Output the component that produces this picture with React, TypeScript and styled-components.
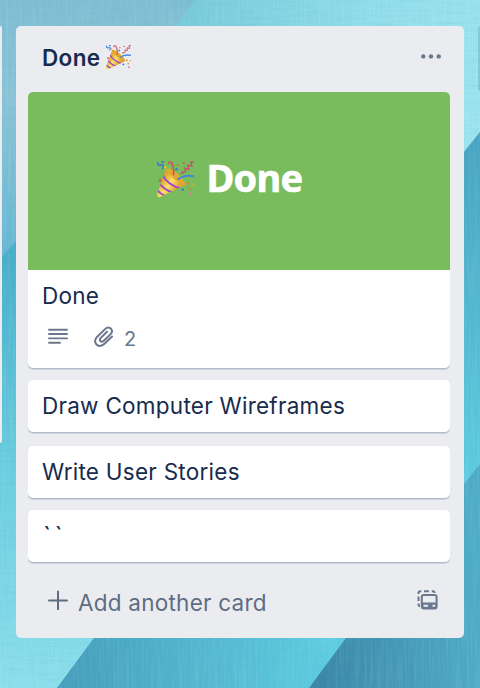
import React from "react";
import styled, { createGlobalStyle } from "styled-components";

const GlobalStyle = createGlobalStyle`
  * { box-sizing: border-box; }
  html, body { margin: 0; padding: 0; }
  body { font-family: Inter, "Liberation Sans", sans-serif; color: #172b4d; overflow: hidden; }
`;

const Board = styled.main`
  position: relative;
  width: 480px;
  height: 688px;
  padding-top: 26px;
  overflow: hidden;
  display: grid;
  grid-template-columns: 2px 448px 2px;
  column-gap: 14px;
  align-items: start;
  isolation: isolate;
`;

const Wallpaper = styled.svg`
  position: absolute;
  inset: 0;
  z-index: -1;
`;

const PreviousList = styled.div`
  height: 417px;
  border-radius: 0 5px 5px 0;
  background: #ebecf0;
`;

const NextList = styled.div`
  height: 65px;
  border-radius: 5px 0 0 5px;
  background: rgba(70, 140, 160, 0.28);
`;

const List = styled.section`
  height: 612px;
  padding: 0 14px 0 12px;
  border-radius: 5px;
  background: #ebecf0;
  display: flex;
  flex-direction: column;
`;

const ListHeader = styled.header`
  height: 66px;
  padding: 0 9px 4px 14px;
  display: flex;
  align-items: center;
  flex: none;
`;

const ListTitle = styled.h2`
  margin: 0;
  padding-top: 2px;
  font-size: 22.5px;
  line-height: 30px;
  font-weight: 600;
  letter-spacing: 0.35px;
`;

const HeaderEmoji = styled.span`
  display: flex;
  margin-left: 6px;
  flex: 1;
`;

const IconButton = styled.button`
  padding: 0;
  border: 0;
  background: none;
  color: #6b778c;
  display: flex;
`;

const Cards = styled.div`
  display: flex;
  flex-direction: column;
`;

const Card = styled.article<{ $height: number; $gap: number }>`
  height: ${(p) => p.$height}px;
  margin-bottom: ${(p) => p.$gap}px;
  border-radius: 5px;
  overflow: hidden;
  background: #fff;
  box-shadow: 0 1px 0 #b4bbc8, 0 2px 0 #cfd3dc;
`;

const Cover = styled.div`
  height: 178px;
  padding: 0 18px 4px 0;
  background: #79bc5d;
  color: #fff;
  display: flex;
  align-items: center;
  justify-content: center;
  gap: 12px;
`;

const CoverText = styled.span`
  padding-bottom: 4px;
  font: 700 38px/44px "Noto Sans", sans-serif;
  letter-spacing: -0.7px;
  -webkit-text-stroke: 0.6px #fff;
`;

const CardTitle = styled.div<{ $spread?: boolean }>`
  padding: 11px 14px 0 ${(p) => (p.$spread ? 15 : 14)}px;
  font-size: ${(p) => (p.$spread ? 25 : 22.5)}px;
  line-height: 30px;
  letter-spacing: ${(p) => (p.$spread ? 3.5 : 0.26)}px;
`;

const Badges = styled.div`
  height: 30px;
  margin-top: 15px;
  padding-left: 20px;
  display: flex;
  align-items: flex-start;
  color: #6b778c;
`;

const AttachmentBadge = styled.span`
  display: flex;
  margin-left: 26px;
  gap: 10px;
  font-size: 20px;
  line-height: 27px;
`;

const Composer = styled.footer`
  display: flex;
  align-items: center;
  height: 76px;
  padding: 0 11px 0 20px;
  color: #5e6c84;
`;

const AddCard = styled.span`
  flex: 1;
  margin-left: 10px;
  padding-top: 6px;
  font-size: 22.5px;
  line-height: 30px;
  letter-spacing: 0.24px;
`;

function BoardWallpaper() {
  return (
    <Wallpaper width="480" height="688" viewBox="0 0 480 688" aria-hidden="true">
      <defs>
        <linearGradient id="sky" x1="0" y1="0" x2="0" y2="250" gradientUnits="userSpaceOnUse">
          <stop offset="0" stopColor="#7ebdd2" />
          <stop offset="0.4" stopColor="#8ac3d6" />
          <stop offset="1" stopColor="#68b7d3" />
        </linearGradient>
        <linearGradient id="upper" x1="180" y1="0" x2="480" y2="60" gradientUnits="userSpaceOnUse">
          <stop offset="0" stopColor="#76c9da" />
          <stop offset="0.6" stopColor="#90dce9" />
          <stop offset="1" stopColor="#9ae3ee" />
        </linearGradient>
        <linearGradient id="pale" x1="0" y1="250" x2="0" y2="688" gradientUnits="userSpaceOnUse">
          <stop offset="0" stopColor="#47adc9" />
          <stop offset="0.5" stopColor="#6acddf" />
          <stop offset="1" stopColor="#8cdeeb" />
        </linearGradient>
        <linearGradient id="middle" x1="70" y1="660" x2="330" y2="660" gradientUnits="userSpaceOnUse">
          <stop offset="0" stopColor="#459fbd" />
          <stop offset="0.5" stopColor="#53b6cf" />
          <stop offset="1" stopColor="#5dcce0" />
        </linearGradient>
        <linearGradient id="right" x1="0" y1="140" x2="0" y2="480" gradientUnits="userSpaceOnUse">
          <stop offset="0" stopColor="#49a4c1" />
          <stop offset="1" stopColor="#5dcbdf" />
        </linearGradient>
        <linearGradient id="deep" x1="320" y1="660" x2="480" y2="650" gradientUnits="userSpaceOnUse">
          <stop offset="0" stopColor="#3b87a7" />
          <stop offset="1" stopColor="#4eabc7" />
        </linearGradient>
        <filter id="warp" x="0" y="0" width="100%" height="100%">
          <feTurbulence type="fractalNoise" baseFrequency="0.45 0.02" numOctaves="2" seed="4" />
          <feColorMatrix values="0 0 0 0 0.8  0 0 0 0 1  0 0 0 0 1  1.2 0 0 0 -0.5" />
        </filter>
        <filter id="weft" x="0" y="0" width="100%" height="100%">
          <feTurbulence type="fractalNoise" baseFrequency="0.03 0.4" numOctaves="2" seed="9" />
          <feColorMatrix values="0 0 0 0 0.1  0 0 0 0 0.4  0 0 0 0 0.55  1 0 0 0 -0.45" />
        </filter>
      </defs>
      <rect width="480" height="688" fill="url(#sky)" />
      <path d="M195 0H480V132L464 152L200 480L100 220L176 26Z" fill="url(#upper)" />
      <path d="M0 259L16 241L200 300V500L94 638L57 688H0Z" fill="url(#pale)" />
      <path d="M94 638H346L309 688H57Z" fill="url(#middle)" />
      <path d="M480 132L464 152L300 350V600H480Z" fill="url(#right)" />
      <path d="M346 638L464 484L480 464V688H309Z" fill="url(#deep)" />
      <rect width="480" height="688" filter="url(#warp)" opacity="0.2" />
      <rect width="480" height="688" filter="url(#weft)" opacity="0.3" />
    </Wallpaper>
  );
}

function PartyPopper({ size }: { size: number }) {
  const id = `cone${size}`;
  return (
    <svg width={size} height={size} viewBox="0 0 36 36" fill="none" aria-hidden="true">
      <defs>
        <linearGradient id={id} x1="6" y1="17" x2="19" y2="27" gradientUnits="userSpaceOnUse">
          <stop stopColor="#dfa42c" />
          <stop offset="0.5" stopColor="#ffdf68" />
          <stop offset="1" stopColor="#e0a238" />
        </linearGradient>
        <clipPath id={`${id}clip`}>
          <path d="M9 7C15 7 26 17 28 23L3 35Q0 36 0 32Z" />
        </clipPath>
      </defs>
      <path d="M9 7C15 7 26 17 28 23L3 35Q0 36 0 32Z" fill={`url(#${id})`} />
      <path d="M10 7.5C11 14 20 22 27.500 22.500C24 15 15 7 10 7.500Z" fill="#e0a92f" />
      <g clipPath={`url(#${id}clip)`} stroke="#9648cf" strokeWidth="1.900">
        <path d="M5 13Q10 23 23 27" />
        <path d="M2 21Q6 28 16 31" />
        <path d="M0 28Q3 32 8 34" />
      </g>
      <path d="M16 14Q17 6 14 1.500Q12 0 11 3" stroke="#dd4a62" strokeWidth="1.600" />
      <path d="M20 18Q27 13 36 15" stroke="#4585dc" strokeWidth="2" />
      <path d="M25 10L24 12L28 10L27 7L31 8L30 4L34 5L33 1L36 1" stroke="#c9506a" strokeWidth="1.300" />
      <path d="M1 1Q0 5 4 4T5 8M4 1L7 1" stroke="#3776d9" strokeWidth="1.500" />
      <circle cx="20" cy="4" r="1" fill="#ef547b" />
      <circle cx="26" cy="2" r="1" fill="#e64568" />
      <circle cx="8" cy="6" r="1.300" fill="#d9c52e" />
      <circle cx="3" cy="19" r="1.300" fill="#df4a56" />
      <circle cx="19" cy="8" r="1.300" fill="#4478db" />
      <circle cx="30" cy="22" r="1.300" fill="#d9872b" />
      <circle cx="35" cy="23" r="1.100" fill="#d4a72d" />
      <circle cx="25" cy="28" r="1.300" fill="#357ccc" />
      <circle cx="32" cy="27" r="1.200" fill="#c08a3a" />
      <circle cx="33" cy="32" r="1.300" fill="#e4799a" />
    </svg>
  );
}

function MoreIcon() {
  return (
    <svg width="20" height="6" viewBox="0 0 20 6" fill="currentColor">
      <circle cx="2.300" cy="2.400" r="2.200" />
      <circle cx="10" cy="2.400" r="2.200" />
      <circle cx="17.700" cy="2.400" r="2.200" />
    </svg>
  );
}

function DescriptionIcon() {
  return (
    <svg width="20" height="20" viewBox="0 0 20 20" stroke="currentColor" strokeWidth="1.900" strokeLinecap="round">
      <path d="M1 3.700H19M1 8H19M1 12.400H19M1 16.800H12" />
    </svg>
  );
}

function AttachmentIcon() {
  return (
    <svg width="20" height="22" viewBox="0 0 20 22" fill="none" stroke="currentColor" strokeWidth="2" strokeLinecap="round" strokeLinejoin="round">
      <path d="M18 10.500L10.500 17.800C7.500 20.800 3.800 20.300 2.200 18.100C.5 15.800 1 13 3.200 10.800L11.100 3.100C13.200 1 15.600 1.300 17 2.800C18.400 4.400 18.200 6.500 16.600 8.100L9.500 15C8.300 16.100 7.100 15.800 6.400 15C5.600 14.200 5.800 12.900 6.800 11.900L13 5.800" />
    </svg>
  );
}

function PlusIcon() {
  return (
    <svg width="20" height="20" viewBox="0 0 20 20" stroke="currentColor" strokeWidth="2" strokeLinecap="round">
      <path d="M1 10.500H19M10 1.500V19.500" />
    </svg>
  );
}

function TemplateIcon() {
  return (
    <svg width="22" height="20" viewBox="0 0 22 20" fill="none" stroke="currentColor" strokeWidth="2">
      <path d="M1.500 4V3Q1.500 1.300 3.200 1.300H4.300M7 1.300H12M14.800 1.300H16Q17.500 1.300 17.500 3M1.500 6.500V11M1.500 13.500V14.700Q1.500 16 3 16.300" />
      <rect x="4.800" y="5" width="14.800" height="13.500" rx="2" />
      <path d="M4.800 12.500H19.600V17Q19.600 18.500 18.200 18.500H6.300Q4.800 18.500 4.800 17Z" fill="currentColor" stroke="none" />
      <path d="M6.500 15.800H11M15.500 15.800H18.200" stroke="#ebecf0" strokeWidth="2" />
    </svg>
  );
}

export default function App() {
  return (
    <>
      <GlobalStyle />
      <Board>
        <BoardWallpaper />
        <PreviousList />
        <List>
          <ListHeader>
            <ListTitle>Done</ListTitle>
            <HeaderEmoji><PartyPopper size={25} /></HeaderEmoji>
            <IconButton aria-label="List actions"><MoreIcon /></IconButton>
          </ListHeader>
          <Cards>
            <Card $height={276} $gap={12}>
              <Cover><PartyPopper size={37} /><CoverText>Done</CoverText></Cover>
              <CardTitle>Done</CardTitle>
              <Badges>
                <DescriptionIcon />
                <AttachmentBadge><AttachmentIcon />2</AttachmentBadge>
              </Badges>
            </Card>
            <Card $height={52} $gap={14}><CardTitle>Draw Computer Wireframes</CardTitle></Card>
            <Card $height={52} $gap={12}><CardTitle>Write User Stories</CardTitle></Card>
            <Card $height={52} $gap={0}><CardTitle $spread>``</CardTitle></Card>
          </Cards>
          <Composer>
            <PlusIcon />
            <AddCard>Add another card</AddCard>
            <IconButton aria-label="Create from template"><TemplateIcon /></IconButton>
          </Composer>
        </List>
        <NextList />
      </Board>
    </>
  );
}
